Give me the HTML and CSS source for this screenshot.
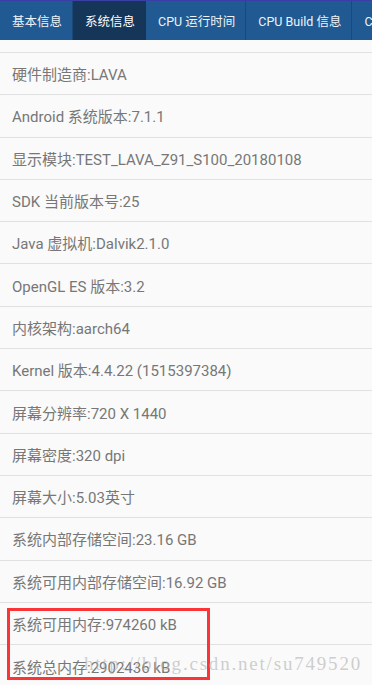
FILE: index.html
```
<!DOCTYPE html>
<html lang="zh">
<head>
<meta charset="utf-8">
<title>系统信息</title>
<link rel="stylesheet" href="styles.css">
</head>
<body>
<div class="page">
  <nav class="tabs">
    <div class="tab">基本信息</div>
    <div class="tab active">系统信息</div>
    <div class="tab">CPU 运行时间</div>
    <div class="tab">CPU Build 信息</div>
    <div class="tab">CPU 信息</div>
  </nav>
  <div class="spacer"></div>
  <ul class="list">
    <li class="row">硬件制造商:LAVA</li>
    <li class="row">Android 系统版本:7.1.1</li>
    <li class="row">显示模块:TEST_LAVA_Z91_S100_20180108</li>
    <li class="row">SDK 当前版本号:25</li>
    <li class="row">Java 虚拟机:Dalvik2.1.0</li>
    <li class="row">OpenGL ES 版本:3.2</li>
    <li class="row">内核架构:aarch64</li>
    <li class="row">Kernel 版本:4.4.22 (1515397384)</li>
    <li class="row">屏幕分辨率:720 X 1440</li>
    <li class="row">屏幕密度:320 dpi</li>
    <li class="row">屏幕大小:5.03英寸</li>
    <li class="row">系统内部存储空间:23.16 GB</li>
    <li class="row">系统可用内部存储空间:16.92 GB</li>
    <li class="row">系统可用内存:974260 kB</li>
    <li class="row last">系统总内存:2902436 kB</li>
  </ul>
  <div class="highlight"></div>
  <div class="watermark">http://blog.csdn.net/su749520</div>
</div>
</body>
</html>
```
FILE: styles.css
```
* { box-sizing: border-box; }
html, body {
  margin: 0;
  padding: 0;
  background: #fafafa;
}
body {
  font-family: Roboto, "Noto Sans CJK SC", sans-serif;
  overflow: hidden;
}
.page {
  position: relative;
  width: 372px;
  height: 685px;
  overflow: hidden;
}
.tabs {
  display: flex;
  height: 40px;
  background: #215a92;
  border-top: 1px solid #3a3fa6;
  overflow: hidden;
  white-space: nowrap;
}
.tab {
  flex: none;
  display: flex;
  align-items: center;
  padding: 0 10px 0 12px;
  color: #eef3f8;
  font-size: 12.5px;
  border-right: 1px solid #1a4a7a;
}
.tab.active {
  background: #163659;
  color: #ffffff;
  border-right-color: #163659;
}
.spacer {
  height: 12px;
}
.list {
  list-style: none;
  margin: 0;
  padding: 0;
  border-top: 1px solid #e1e1e1;
}
.row {
  height: 42.3px;
  display: flex;
  align-items: center;
  padding-left: 12px;
  border-bottom: 1px solid #e1e1e1;
  color: #777777;
  font-size: 15px;
  white-space: nowrap;
}
.row.last {
  border-bottom: none;
}
.highlight {
  position: absolute;
  left: 7px;
  top: 608px;
  width: 203px;
  height: 72px;
  border: 3px solid #fb3438;
}
.watermark {
  position: absolute;
  right: 10px;
  top: 653px;
  font-family: "Liberation Serif", serif;
  font-size: 19px;
  letter-spacing: 1.8px;
  color: rgba(175, 175, 175, 0.6);
  white-space: nowrap;
}
```
